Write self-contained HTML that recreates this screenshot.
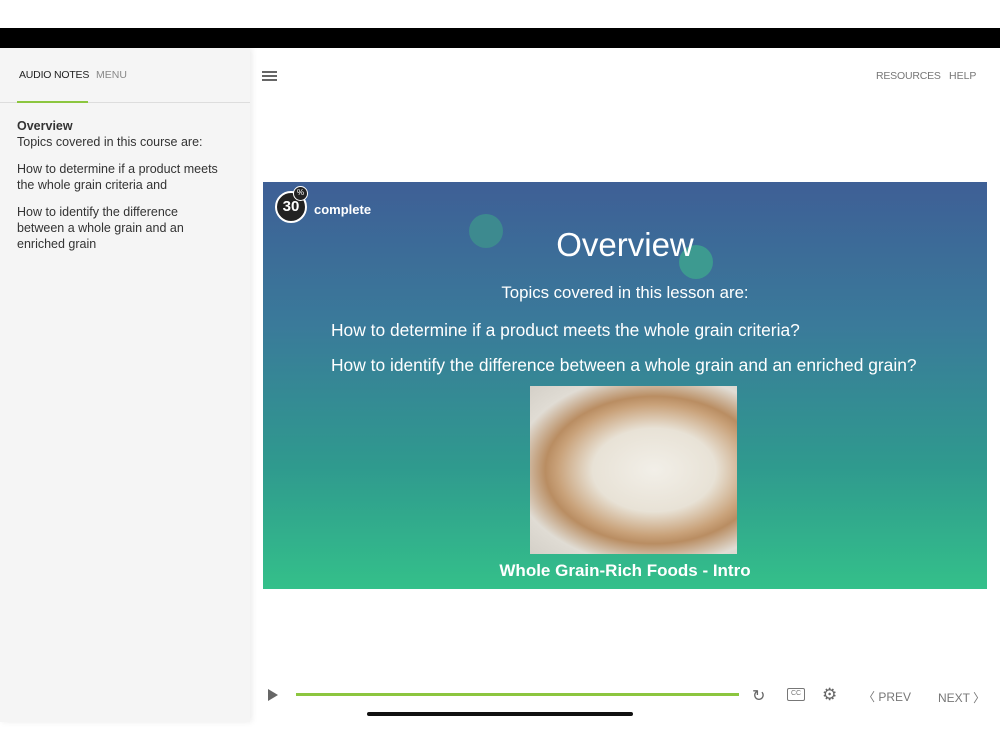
<!DOCTYPE html>
<html><head><meta charset="utf-8"><style>
*{margin:0;padding:0;box-sizing:border-box}
body{width:1000px;height:750px;background:#fff;font-family:"Liberation Sans",sans-serif;position:relative;overflow:hidden}
.abs{position:absolute;white-space:nowrap}
</style></head><body>
<div class="abs" style="left:0;top:28px;width:1000px;height:20px;background:#000"></div>
<div class="abs" style="left:0;top:48px;width:250px;height:674px;background:#f5f5f5;box-shadow:2px 0 6px rgba(0,0,0,.08)"></div>
<div class="abs" style="left:19px;top:69px;font-size:10.5px;color:#222;letter-spacing:-0.2px">AUDIO NOTES</div>
<div class="abs" style="left:96px;top:69px;font-size:10.5px;color:#888">MENU</div>
<div class="abs" style="left:0;top:102px;width:250px;height:1px;background:#ddd"></div>
<div class="abs" style="left:17px;top:101px;width:71px;height:2px;background:#8cc63f"></div>
<div class="abs" style="left:17px;top:118px;font-size:12.5px;color:#333;line-height:16px;width:210px;white-space:normal">
<b>Overview</b><br>Topics covered in this course are:<div style="height:11px"></div>How to determine if a product meets the whole grain criteria and<div style="height:11px"></div>How to identify the difference between a whole grain and an enriched grain</div>
<div class="abs" style="left:262px;top:71px;width:15px;height:2px;background:#666;box-shadow:0 4px 0 #666,0 8px 0 #666"></div>
<div class="abs" style="left:876px;top:70px;font-size:10.5px;color:#777;letter-spacing:-0.2px">RESOURCES</div>
<div class="abs" style="left:949px;top:70px;font-size:10.5px;color:#777">HELP</div>
<div class="abs" style="left:263px;top:182px;width:724px;height:407px;background:linear-gradient(180deg,#3e5f96 0%,#3a7a9a 35%,#2f9a8e 70%,#34c08a 100%)"></div>
<div class="abs" style="left:469px;top:214px;width:34px;height:34px;border-radius:50%;background:#3d8a8f"></div>
<div class="abs" style="left:679px;top:245px;width:34px;height:34px;border-radius:50%;background:#3d9a90"></div>
<div class="abs" style="left:275px;top:191px;width:32px;height:32px;border-radius:50%;background:#222;border:2px solid #fff;color:#fff;font-weight:bold;font-size:15px;text-align:center;line-height:28px">30</div>
<div class="abs" style="left:293px;top:186px;width:15px;height:15px;border-radius:50%;background:#222;border:1.5px solid #fff;color:#fff;font-size:8px;text-align:center;line-height:12px">%</div>
<div class="abs" style="left:314px;top:202px;color:#fff;font-weight:bold;font-size:13px">complete</div>
<div class="abs" style="left:263px;top:226px;width:724px;text-align:center;color:#fff;font-size:33px">Overview</div>
<div class="abs" style="left:263px;top:283px;width:724px;text-align:center;color:#fff;font-size:16.8px">Topics covered in this lesson are:</div>
<div class="abs" style="left:331px;top:320px;color:#fff;font-size:17.4px">How to determine if a product meets the whole grain criteria?</div>
<div class="abs" style="left:331px;top:355px;color:#fff;font-size:17.4px">How to identify the difference between a whole grain and an enriched grain?</div>
<div class="abs" style="left:530px;top:386px;width:207px;height:168px;background:radial-gradient(ellipse at 60% 50%,#f2efe8 0%,#e8e2d6 35%,#c9a27a 55%,#b98d62 62%,#e0dcd4 80%,#d4d0c8 100%)"></div>
<div class="abs" style="left:263px;top:561px;width:724px;text-align:center;color:#fff;font-size:17px;font-weight:bold">Whole Grain-Rich Foods - Intro</div>
<div class="abs" style="left:268px;top:689px;width:0;height:0;border-left:10px solid #666;border-top:6px solid transparent;border-bottom:6px solid transparent"></div>
<div class="abs" style="left:296px;top:693px;width:443px;height:3px;background:#8cc63f"></div>
<div class="abs" style="left:752px;top:686px;font-size:16px;color:#666">↻</div>
<div class="abs" style="left:787px;top:688px;width:18px;height:13px;border:1.5px solid #777;border-radius:2px;font-size:7px;color:#777;text-align:center;line-height:10px">CC</div>
<div class="abs" style="left:822px;top:685px;font-size:17px;color:#666">⚙</div>
<div class="abs" style="left:863px;top:688px;font-size:12px;color:#777">〈 PREV</div>
<div class="abs" style="left:938px;top:689px;font-size:12px;color:#777">NEXT 〉</div>
<div class="abs" style="left:367px;top:712px;width:266px;height:4px;border-radius:2px;background:#111"></div>
</body></html>
